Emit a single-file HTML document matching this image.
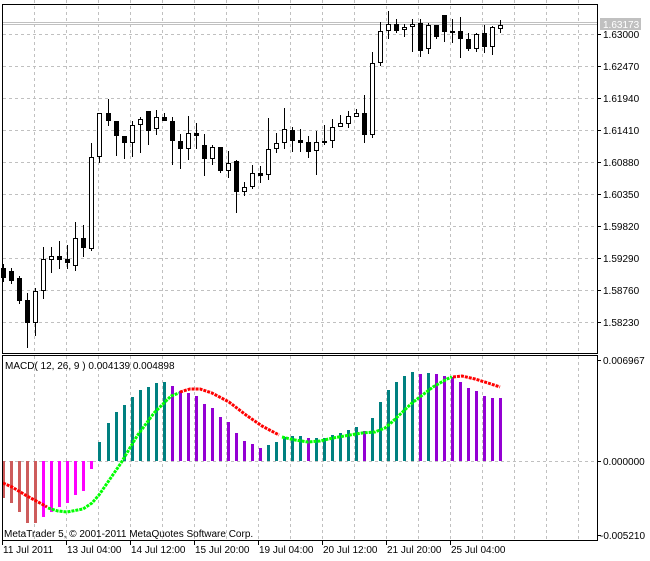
<!DOCTYPE html>
<html><head><meta charset="utf-8"><style>
html,body{margin:0;padding:0;background:#fff;}
svg{display:block;}
text{font-family:"Liberation Sans",sans-serif;font-size:10px;fill:#000;}
</style></head><body>
<svg width="650" height="561" viewBox="0 0 650 561" xmlns="http://www.w3.org/2000/svg" shape-rendering="crispEdges">
<rect width="650" height="561" fill="#fff"/>
<!-- grids -->
<g stroke="#c0c0c0" stroke-width="1" stroke-dasharray="3,3">
<path d="M34.5 0V353M66.5 0V353M98.5 0V353M130.5 0V353M162.5 0V353M194.5 0V353M226.5 0V353M258.5 0V353M290.5 0V353M322.5 0V353M354.5 0V353M386.5 0V353M418.5 0V353M450.5 0V353M482.5 0V353M514.5 0V353M546.5 0V353M578.5 0V353"/>
<path d="M34.5 356V540M66.5 356V540M98.5 356V540M130.5 356V540M162.5 356V540M194.5 356V540M226.5 356V540M258.5 356V540M290.5 356V540M322.5 356V540M354.5 356V540M386.5 356V540M418.5 356V540M450.5 356V540M482.5 356V540M514.5 356V540M546.5 356V540M578.5 356V540"/>
<path d="M3 34.5H597M3 66.5H597M3 98.5H597M3 130.5H597M3 162.5H597M3 194.5H597M3 226.5H597M3 258.5H597M3 290.5H597M3 322.5H597"/>
<path d="M3 461.5H597"/>
</g>
<path d="M3 22.5H597M3 24.5H597" stroke="#c0c0c0"/>
<!-- candles -->
<g fill="#000">
<rect x="3" y="264" width="1" height="18"/><rect x="1" y="268" width="5" height="10"/>
<rect x="11" y="268" width="1" height="16"/><rect x="9" y="271" width="5" height="10"/>
<rect x="19" y="276" width="1" height="28"/><rect x="17" y="278" width="5" height="23"/>
<rect x="27" y="293" width="1" height="55"/><rect x="25" y="300" width="5" height="23"/>
<rect x="35" y="288" width="1" height="48"/>
<rect x="43" y="247" width="1" height="52"/>
<rect x="51" y="247" width="1" height="26"/>
<rect x="59" y="241" width="1" height="28"/><rect x="57" y="256" width="5" height="4"/>
<rect x="67" y="245" width="1" height="24"/><rect x="65" y="259" width="5" height="4"/>
<rect x="75" y="222" width="1" height="49"/>
<rect x="83" y="225" width="1" height="32"/><rect x="81" y="238" width="5" height="10"/>
<rect x="91" y="143" width="1" height="108"/>
<rect x="99" y="113" width="1" height="50"/>
<rect x="108" y="99" width="1" height="27"/><rect x="106" y="113" width="5" height="8"/>
<rect x="116" y="121" width="1" height="35"/><rect x="114" y="121" width="5" height="15"/>
<rect x="124" y="136" width="1" height="23"/><rect x="122" y="136" width="5" height="7"/>
<rect x="132" y="121" width="1" height="36"/>
<rect x="140" y="117" width="1" height="36"/>
<rect x="148" y="111" width="1" height="34"/><rect x="146" y="111" width="5" height="20"/>
<rect x="156" y="110" width="1" height="25"/>
<rect x="164" y="113" width="1" height="8"/><rect x="162" y="117" width="5" height="4"/>
<rect x="172" y="117" width="1" height="48"/><rect x="170" y="121" width="5" height="20"/>
<rect x="180" y="134" width="1" height="35"/><rect x="178" y="141" width="5" height="8"/>
<rect x="188" y="116" width="1" height="44"/>
<rect x="196" y="123" width="1" height="26"/><rect x="194" y="133" width="5" height="3"/>
<rect x="204" y="134" width="1" height="42"/><rect x="202" y="145" width="5" height="14"/>
<rect x="212" y="145" width="1" height="20"/>
<rect x="220" y="147" width="1" height="26"/><rect x="218" y="147" width="5" height="24"/>
<rect x="228" y="151" width="1" height="27"/>
<rect x="236" y="160" width="1" height="53"/><rect x="234" y="161" width="5" height="31"/>
<rect x="244" y="182" width="1" height="14"/>
<rect x="252" y="165" width="1" height="24"/>
<rect x="260" y="166" width="1" height="17"/><rect x="258" y="173" width="5" height="3"/>
<rect x="268" y="118" width="1" height="62"/>
<rect x="276" y="133" width="1" height="20"/>
<rect x="284" y="108" width="1" height="41"/>
<rect x="292" y="127" width="1" height="25"/><rect x="290" y="130" width="5" height="11"/>
<rect x="300" y="129" width="1" height="23"/><rect x="298" y="140" width="5" height="3"/>
<rect x="308" y="136" width="1" height="22"/><rect x="306" y="142" width="5" height="10"/>
<rect x="316" y="131" width="1" height="44"/>
<rect x="324" y="125" width="1" height="20"/><rect x="322" y="141" width="5" height="2"/>
<rect x="332" y="119" width="1" height="29"/>
<rect x="340" y="115" width="1" height="12"/>
<rect x="348" y="111" width="1" height="17"/>
<rect x="356" y="109" width="1" height="8"/>
<rect x="364" y="95" width="1" height="48"/><rect x="362" y="113" width="5" height="22"/>
<rect x="372" y="52" width="1" height="86"/>
<rect x="380" y="22" width="1" height="44"/>
<rect x="388" y="11" width="1" height="28"/>
<rect x="396" y="19" width="1" height="14"/><rect x="394" y="24" width="5" height="7"/>
<rect x="404" y="24" width="1" height="13"/>
<rect x="412" y="19" width="1" height="33"/>
<rect x="420" y="19" width="1" height="38"/><rect x="418" y="23" width="5" height="28"/>
<rect x="428" y="23" width="1" height="31"/>
<rect x="436" y="25" width="1" height="14"/><rect x="434" y="25" width="5" height="12"/>
<rect x="444" y="15" width="1" height="27"/><rect x="442" y="15" width="5" height="17"/>
<rect x="452" y="19" width="1" height="24"/><rect x="450" y="31" width="5" height="2"/>
<rect x="460" y="17" width="1" height="41"/><rect x="458" y="31" width="5" height="8"/>
<rect x="468" y="33" width="1" height="18"/><rect x="466" y="39" width="5" height="10"/>
<rect x="476" y="33" width="1" height="19"/>
<rect x="484" y="25" width="1" height="28"/><rect x="482" y="33" width="5" height="14"/>
<rect x="492" y="26" width="1" height="29"/>
<rect x="500" y="20" width="1" height="13"/>
</g>
<g fill="#fff" stroke="#000" stroke-width="1">
<rect x="33.5" y="291.5" width="4" height="31"/>
<rect x="41.5" y="259.5" width="4" height="31"/>
<rect x="49.5" y="256.5" width="4" height="3"/>
<rect x="73.5" y="238.5" width="4" height="27"/>
<rect x="89.5" y="157.5" width="4" height="91"/>
<rect x="97.5" y="113.5" width="4" height="43"/>
<rect x="130.5" y="125.5" width="4" height="17"/>
<rect x="138.5" y="119.5" width="4" height="5"/>
<rect x="154.5" y="117.5" width="4" height="11"/>
<rect x="186.5" y="133.5" width="4" height="15"/>
<rect x="210.5" y="147.5" width="4" height="11"/>
<rect x="226.5" y="163.5" width="4" height="7"/>
<rect x="242.5" y="187.5" width="4" height="4"/>
<rect x="250.5" y="173.5" width="4" height="13"/>
<rect x="266.5" y="149.5" width="4" height="25"/>
<rect x="274.5" y="143.5" width="4" height="5"/>
<rect x="282.5" y="129.5" width="4" height="13"/>
<rect x="314.5" y="142.5" width="4" height="8"/>
<rect x="330.5" y="127.5" width="4" height="13"/>
<rect x="338.5" y="123.5" width="4" height="3"/>
<rect x="346.5" y="116.5" width="4" height="7"/>
<rect x="354.5" y="113.5" width="4" height="3"/>
<rect x="370.5" y="63.5" width="4" height="71"/>
<rect x="378.5" y="31.5" width="4" height="31"/>
<rect x="386.5" y="24.5" width="4" height="6"/>
<rect x="402.5" y="27.5" width="4" height="2"/>
<rect x="410.5" y="24.5" width="4" height="2"/>
<rect x="426.5" y="25.5" width="4" height="23"/>
<rect x="474.5" y="34.5" width="4" height="14"/>
<rect x="490.5" y="27.5" width="4" height="19"/>
<rect x="498.5" y="25.5" width="4" height="3"/>
</g>
<!-- MACD histogram -->
<g fill="#cd5c5c">
<rect x="2" y="461" width="3" height="37"/><rect x="10" y="461" width="3" height="42"/><rect x="18" y="461" width="3" height="51"/><rect x="26" y="461" width="3" height="62"/><rect x="34" y="461" width="3" height="62"/>
</g>
<g fill="#ff00ff">
<rect x="42" y="461" width="3" height="56"/><rect x="50" y="461" width="3" height="51"/><rect x="58" y="461" width="3" height="46"/><rect x="66" y="461" width="3" height="42"/><rect x="74" y="461" width="3" height="34"/><rect x="82" y="461" width="3" height="30"/><rect x="90" y="461" width="3" height="8"/>
</g>
<g fill="#008080">
<rect x="98" y="442" width="3" height="19"/><rect x="107" y="423" width="3" height="38"/><rect x="115" y="412" width="3" height="49"/><rect x="123" y="405" width="3" height="56"/><rect x="131" y="397" width="3" height="64"/><rect x="139" y="390" width="3" height="71"/><rect x="147" y="387" width="3" height="74"/><rect x="155" y="383" width="3" height="78"/><rect x="163" y="382" width="3" height="79"/>
<rect x="267" y="445" width="3" height="16"/><rect x="275" y="442" width="3" height="19"/><rect x="283" y="437" width="3" height="24"/><rect x="291" y="436" width="3" height="25"/><rect x="299" y="436" width="3" height="25"/>
<rect x="315" y="438" width="3" height="23"/><rect x="323" y="438" width="3" height="23"/><rect x="331" y="435" width="3" height="26"/><rect x="339" y="433" width="3" height="28"/><rect x="347" y="430" width="3" height="31"/><rect x="355" y="427" width="3" height="34"/>
<rect x="371" y="418" width="3" height="43"/><rect x="379" y="402" width="3" height="59"/><rect x="387" y="390" width="3" height="71"/><rect x="395" y="382" width="3" height="79"/><rect x="403" y="376" width="3" height="85"/><rect x="411" y="372" width="3" height="89"/><rect x="427" y="373" width="3" height="88"/>
</g>
<g fill="#9400d3">
<rect x="171" y="386" width="3" height="75"/><rect x="179" y="391" width="3" height="70"/><rect x="187" y="393" width="3" height="68"/><rect x="195" y="396" width="3" height="65"/><rect x="203" y="404" width="3" height="57"/><rect x="211" y="408" width="3" height="53"/><rect x="219" y="417" width="3" height="44"/><rect x="227" y="422" width="3" height="39"/><rect x="235" y="433" width="3" height="28"/><rect x="243" y="441" width="3" height="20"/><rect x="251" y="444" width="3" height="17"/><rect x="259" y="448" width="3" height="13"/>
<rect x="307" y="438" width="3" height="23"/><rect x="363" y="431" width="3" height="30"/>
<rect x="419" y="374" width="3" height="87"/><rect x="435" y="374" width="3" height="87"/><rect x="443" y="376" width="3" height="85"/><rect x="451" y="377" width="3" height="84"/><rect x="459" y="382" width="3" height="79"/><rect x="467" y="388" width="3" height="73"/><rect x="475" y="391" width="3" height="70"/><rect x="483" y="396" width="3" height="65"/><rect x="491" y="398" width="3" height="63"/><rect x="499" y="398" width="3" height="63"/>
</g>
<!-- signal line -->
<g fill="none" stroke-width="3" stroke-dasharray="3,1" shape-rendering="auto">
<polyline stroke="#ff0000" points="3,483 12,487 27,496 40,503 47,507"/>
<polyline stroke="#00ff00" points="48,508 58,511 67,512 83,509 92,503 99,495 110,479 121,463 137,436 154,413 171,396 179,393"/>
<polyline stroke="#ff0000" points="180,392 190,389 200,389 212,393 229,402 246,415 262,426 279,435"/>
<polyline stroke="#00ff00" points="282,437 295,440 308,442 320,441 333,438 350,435 362,433 375,432 385,428 392,422 412,403 433,387 447,379 452,377"/>
<polyline stroke="#ff0000" points="453,377 462,376 475,379 488,383 500,387"/>
</g>
<!-- frames -->
<rect x="2.5" y="4.5" width="595" height="349" fill="none" stroke="#000"/>
<rect x="2.5" y="355.5" width="595" height="185" fill="none" stroke="#000"/>
<!-- price axis -->
<g stroke="#000">
<path d="M598 34.5H601M598 66.5H601M598 98.5H601M598 130.5H601M598 162.5H601M598 194.5H601M598 226.5H601M598 258.5H601M598 290.5H601M598 322.5H601M598 360.5H601M598 461.5H601M598 535.5H601"/>
<path d="M2.5 541V545M66.5 541V545M130.5 541V545M194.5 541V545M258.5 541V545M322.5 541V545M386.5 541V545M450.5 541V545"/>
</g>
<rect x="600" y="18" width="41" height="12" fill="#c0c0c0"/>
<text x="603" y="28" style="fill:#fff">1.63173</text>
<text x="603" y="38">1.63000</text>
<text x="603" y="70">1.62470</text>
<text x="603" y="102">1.61940</text>
<text x="603" y="134">1.61410</text>
<text x="603" y="166">1.60880</text>
<text x="603" y="198">1.60350</text>
<text x="603" y="230">1.59820</text>
<text x="603" y="262">1.59290</text>
<text x="603" y="294">1.58760</text>
<text x="603" y="326">1.58230</text>
<text x="603" y="364">0.006967</text>
<text x="603" y="465">0.000000</text>
<text x="600" y="539">-0.005210</text>
<text x="5" y="369">MACD( 12, 26, 9 ) 0.004139 0.004898</text>
<text x="4" y="537">MetaTrader 5, © 2001-2011 MetaQuotes Software Corp.</text>
<text x="3" y="553">11 Jul 2011</text>
<text x="67" y="553">13 Jul 04:00</text>
<text x="131" y="553">14 Jul 12:00</text>
<text x="195" y="553">15 Jul 20:00</text>
<text x="259" y="553">19 Jul 04:00</text>
<text x="323" y="553">20 Jul 12:00</text>
<text x="387" y="553">21 Jul 20:00</text>
<text x="451" y="553">25 Jul 04:00</text>
</svg>
</body></html>
